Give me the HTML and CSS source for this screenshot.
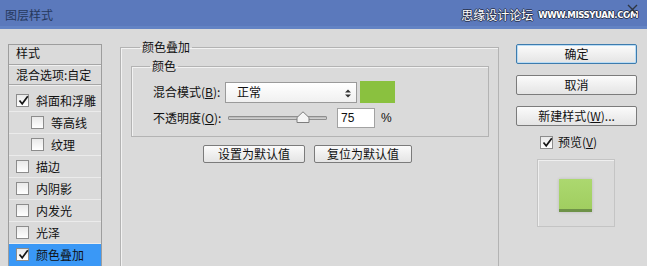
FILE: index.html
```html
<!DOCTYPE html>
<html lang="zh-CN">
<head>
    <meta charset="UTF-8">
    <meta name="viewport" content="width=device-width, initial-scale=1.0">
    <title>图层样式</title>
    <link rel="stylesheet" href="styles.css">
</head>
<body>
    <div class="titlebar">
        <span class="title">图层样式</span>
        <span class="mark">
            <span class="mark-cn">思缘设计论坛</span>
            <span class="mark-en">WWW.MISSYUAN.COM</span>
        </span>
        <svg class="close" width="11" height="11" viewBox="0 0 11 11">
            <path d="M1 1 L10 10 M10 1 L1 10" stroke="#2f3642" stroke-width="1.4" fill="none"/>
        </svg>
    </div>

    <div class="dialog">
        <!-- Styles list -->
        <div class="styles-panel">
            <div class="panel-head">样式</div>
            <div class="panel-blend">混合选项:自定</div>
            <ul class="effects">
                <li><span class="cb"><svg viewBox="0 0 13 13"><path d="M2.5 6.5 L5.2 9.8 L10.8 2.2"/></svg></span>斜面和浮雕</li>
                <li class="sub"><span class="cb"></span>等高线</li>
                <li class="sub"><span class="cb"></span>纹理</li>
                <li><span class="cb"></span>描边</li>
                <li><span class="cb"></span>内阴影</li>
                <li><span class="cb"></span>内发光</li>
                <li><span class="cb"></span>光泽</li>
                <li class="active"><span class="cb"><svg viewBox="0 0 13 13"><path d="M2.5 6.5 L5.2 9.8 L10.8 2.2"/></svg></span>颜色叠加</li>
            </ul>
        </div>

        <!-- Colour overlay settings -->
        <div class="main">
            <fieldset class="group">
                <legend>颜色叠加</legend>
                <fieldset class="group inner">
                    <legend>颜色</legend>
                    <div class="row">
                        <label class="label">混合模式(<u>B</u>):</label>
                        <div class="select">
                            正常
                            <svg class="arrows" width="6" height="9" viewBox="0 0 6 9">
                                <path d="M0 3.5 L3 0.5 L6 3.5 Z M0 5.5 L3 8.5 L6 5.5 Z" fill="#333"/>
                            </svg>
                        </div>
                        <div class="swatch"></div>
                    </div>
                    <div class="row">
                        <label class="label">不透明度(<u>O</u>):</label>
                        <div class="slider">
                            <svg class="thumb" width="14" height="12" viewBox="0 0 14 12">
                                <polygon points="1,11.5 1,6.5 7,0.8 13,6.5 13,11.5" fill="#f4f4f4" stroke="#7d7d7d"/>
                            </svg>
                        </div>
                        <div class="num">75</div>
                        <span class="pct">%</span>
                    </div>
                </fieldset>
                <div class="defaults">
                    <button class="btn small wide">设置为默认值</button>
                    <button class="btn small">复位为默认值</button>
                </div>
            </fieldset>
        </div>

        <!-- Dialog buttons -->
        <div class="side">
            <button class="btn primary">确定</button>
            <button class="btn">取消</button>
            <button class="btn">新建样式(<u>W</u>)...</button>
            <div class="preview-check">
                <span class="cb"><svg viewBox="0 0 13 13"><path d="M2.5 6.5 L5.2 9.8 L10.8 2.2"/></svg></span>
                预览(<u>V</u>)
            </div>
            <div class="preview">
                <div class="preview-swatch"></div>
            </div>
        </div>
    </div>
</body>
</html>
```

FILE: styles.css
```css
/* General */
body {
    margin: 0;
    width: 647px;
    height: 266px;
    overflow: hidden;
    background: #dadada;
    color: #111;
    font-family: "Noto Sans CJK SC", "Liberation Sans", sans-serif;
    font-size: 12px;
    line-height: 16px;
}

u {
    text-decoration: underline;
    text-underline-offset: 1px;
}

/* Title bar */
.titlebar {
    position: relative;
    height: 26px;
    border-bottom: 3px solid #6383c4;
    background: #5b79bc;
    display: flex;
    align-items: center;
    padding: 0 0 0 5px;
}

.title {
    color: #26385c;
    font-size: 12px;
    margin-top: 3px;
}

.mark {
    margin-left: auto;
    margin-right: 9px;
    margin-top: 3px;
    display: flex;
    align-items: center;
    gap: 5px;
    color: #fff;
    text-shadow: 1px 0 0 #2b3550, -1px 0 0 #2b3550, 0 1px 0 #2b3550, 0 -1px 0 #2b3550;
}

.mark-cn {
    font-size: 12px;
}

.mark-en {
    font-family: "DejaVu Sans Condensed", "Liberation Sans", sans-serif;
    font-size: 9.5px;
    font-weight: bold;
    letter-spacing: -0.4px;
}

.close {
    position: absolute;
    right: 9px;
    top: 4px;
}

/* Dialog layout */
.dialog {
    display: flex;
    align-items: flex-start;
    padding: 10px 0 0 8px;
}

/* Styles list */
.styles-panel {
    width: 92px;
    margin-top: 5px;
    border: 1px solid #9d9d9d;
    border-bottom: none;
    height: 230px;
}

.panel-head {
    height: 19px;
    padding-left: 7px;
    line-height: 16px;
    border-bottom: 1px solid #a6a6a6;
    box-shadow: 0 1px 0 #f0f0f0;
}

.panel-blend {
    height: 19px;
    padding-left: 7px;
    line-height: 20px;
    border-bottom: 1px solid #a6a6a6;
    box-shadow: 0 1px 0 #f0f0f0;
}

.effects {
    list-style: none;
    margin: 5px 0 0;
    padding: 0;
}

.effects li {
    height: 21px;
    border-bottom: 1px solid #ebebeb;
    display: flex;
    align-items: center;
    padding-left: 7px;
}

.effects li.sub {
    padding-left: 22px;
}

.effects li.active {
    background: #3a98f6;
    border-bottom-color: #3a98f6;
}

.cb {
    width: 11px;
    height: 11px;
    border: 1px solid #8c8c8c;
    background: linear-gradient(#e9e9e9, #ffffff);
    margin-right: 7px;
    flex: none;
    display: inline-block;
}

.cb svg {
    display: block;
    width: 13px;
    height: 13px;
    margin: -1px 0 0 0;
}

.cb path {
    fill: none;
    stroke: #151515;
    stroke-width: 1.7;
}

/* Settings groups */
.main {
    margin-left: 18px;
}

.group {
    margin: 0;
    padding: 0;
    border: 1px solid #b3b3b3;
    box-shadow: inset 1px 1px 0 #f2f2f2;
    width: 379px;
    height: 240px;
    box-sizing: border-box;
}

.group legend {
    margin-left: 19px;
    padding: 0 2px;
    line-height: 16px;
    font-size: 12px;
}

.group.inner {
    width: 358px;
    height: 79px;
    margin: 3px 0 0 10px;
    padding: 0 0 0 21px;
}

.group.inner legend {
    margin-left: -3px;
}

.row {
    display: flex;
    align-items: center;
    height: 22px;
}

.row:first-of-type {
    margin-top: 7px;
}

.row + .row {
    margin-top: 4px;
}

.label {
    width: 72px;
    flex: none;
}

.select {
    border: 1px solid #9a9a9a;
    background: linear-gradient(#ffffff, #f0f0f0);
    display: flex;
    align-items: center;
    padding-left: 11px;
    box-sizing: border-box;
    width: 132px;
    height: 21px;
    position: relative;
}

.arrows {
    position: absolute;
    right: 5px;
    top: 6px;
}

.swatch {
    width: 35px;
    height: 22px;
    margin-left: 3px;
    background: #8ac13f;
}

.slider {
    position: relative;
    width: 99px;
    height: 4px;
    margin-left: 3px;
    box-sizing: border-box;
    border: 1px solid #8e8e8e;
    background: linear-gradient(#b5b5b5, #d6d6d6);
    border-radius: 1px;
}

.thumb {
    position: absolute;
    left: 67px;
    top: -6px;
}

.num {
    width: 38px;
    height: 20px;
    margin-left: 10px;
    box-sizing: border-box;
    border: 1px solid #a2a2a2;
    background: #fff;
    padding-left: 3px;
    font-family: "Liberation Sans", sans-serif;
    font-size: 12px;
    line-height: 18px;
}

.pct {
    margin-left: 6px;
    font-family: "Liberation Sans", sans-serif;
}

.defaults {
    display: flex;
    gap: 9px;
    margin: 8px 0 0 82px;
}

/* Buttons */
.btn {
    font-family: inherit;
    font-size: 12px;
    line-height: 16px;
    color: #111;
    height: 20px;
    padding: 0;
    border: 1px solid #7b7b7b;
    border-radius: 2px;
    background: linear-gradient(#fbfbfb, #e4e4e4);
}

.btn.small {
    width: 98px;
    height: 18px;
    line-height: 14px;
}

.btn.small.wide {
    width: 102px;
}

.btn.primary {
    border-color: #3d7bad;
    box-shadow: inset 0 0 0 1px #b9dcf5;
}

.side {
    margin-left: 17px;
    margin-top: 5px;
    width: 121px;
    display: flex;
    flex-direction: column;
}

.side .btn {
    width: 121px;
    margin-bottom: 11px;
}

.preview-check {
    display: flex;
    align-items: center;
    padding-left: 24px;
    margin-top: -3px;
    height: 16px;
}

.preview-check .cb {
    margin-right: 5px;
}

.preview {
    width: 78px;
    height: 68px;
    margin: 9px 0 0 21px;
    box-sizing: border-box;
    border: 1px solid #c4c4c4;
    box-shadow: inset 1px 1px 0 #efefef;
    padding: 19px 0 0 21px;
}

.preview-swatch {
    width: 33px;
    height: 33px;
    background: linear-gradient(#acd86f, #9fcd5f);
    box-shadow: inset 0 -3px 0 #6e9248, 0 0 3px rgba(0, 0, 0, 0.15);
}
```
